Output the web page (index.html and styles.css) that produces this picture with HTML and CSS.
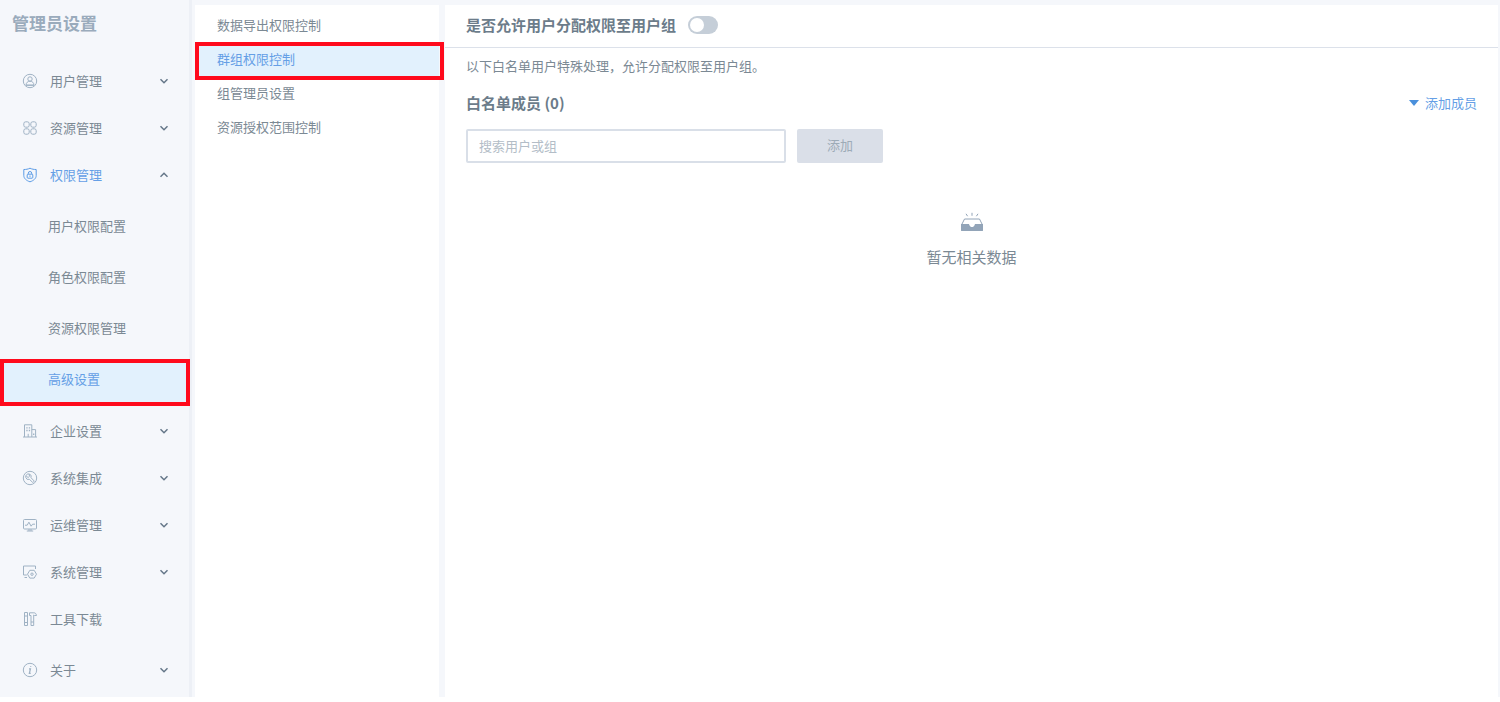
FILE: index.html
```html
<!DOCTYPE html>
<html lang="zh-CN">
<head>
    <meta charset="UTF-8">
    <meta name="viewport" content="width=device-width, initial-scale=1.0">
    <title>管理员设置</title>
    <link rel="stylesheet" href="styles.css">
</head>
<body>
    <div class="app">
        <nav class="sidebar">
            <h1>管理员设置</h1>
            <button class="menu-item" type="button">
                <svg class="icon" viewBox="0 0 16 16"><circle cx="8" cy="8" r="6.7"/><circle cx="8" cy="6" r="2.2"/><path d="M4 12.200c0-2.400 1.700-4 4-4s4 1.600 4 4zM4 12.200h8"/></svg>
                <span>用户管理</span>
                <svg class="arrow" viewBox="0 0 10 10"><path d="M1.500 3.200 5 6.700l3.500-3.500"/></svg>
            </button>
            <button class="menu-item" type="button">
                <svg class="icon" viewBox="0 0 16 16"><rect x="1.800" y="1.800" width="5.400" height="5.400" rx="1.900"/><rect x="8.800" y="1.800" width="5.400" height="5.400" rx="1.900"/><rect x="1.800" y="8.800" width="5.400" height="5.400" rx="1.900"/><rect x="8.800" y="8.800" width="5.400" height="5.400" rx="1.900"/></svg>
                <span>资源管理</span>
                <svg class="arrow" viewBox="0 0 10 10"><path d="M1.500 3.200 5 6.700l3.500-3.500"/></svg>
            </button>
            <button class="menu-item open" type="button" aria-expanded="true">
                <svg class="icon" viewBox="0 0 16 16"><path d="M8 1.200c2 1 4 1.300 6.200 1.300v6c0 3-2.700 5.200-6.200 6.300-3.500-1.100-6.200-3.300-6.200-6.300v-6C4 2.500 6 2.200 8 1.200z"/><rect x="5.200" y="7.200" width="5.600" height="4" rx=".8"/><path d="M6.300 7V6.200a1.700 1.700 0 0 1 3.400 0V7M8 8.500v1.400"/></svg>
                <span>权限管理</span>
                <svg class="arrow" viewBox="0 0 10 10"><path d="M1.500 6.800 5 3.300l3.500 3.500"/></svg>
            </button>
            <ul class="submenu">
                <li><a href="#">用户权限配置</a></li>
                <li><a href="#">角色权限配置</a></li>
                <li><a href="#">资源权限管理</a></li>
                <li class="active marked"><a href="#">高级设置</a></li>
            </ul>
            <button class="menu-item" type="button">
                <svg class="icon" viewBox="0 0 16 16"><path d="M2.500 14V1.800h7.300V14M9.800 6.600h3.800V14M1 14h14M6.200 14v-3.200"/><path d="M4.300 4.800h1.300M6.800 4.800h1.300M4.300 7.500h1.300M6.800 7.500h1.300M11.700 10.500v1.500" stroke-width="1.300"/></svg>
                <span>企业设置</span>
                <svg class="arrow" viewBox="0 0 10 10"><path d="M1.500 3.200 5 6.700l3.500-3.500"/></svg>
            </button>
            <button class="menu-item" type="button">
                <svg class="icon" viewBox="0 0 16 16"><circle cx="8" cy="8" r="6.700"/><path d="M7.200 4a2.800 2.800 0 0 0-3.400 3.500 2.800 2.800 0 0 0 3.700 1.800l3.300 3.300 1.500-1.500L9 7.700A2.800 2.800 0 0 0 7.200 4L7.500 6.300 6.200 7.400 4.400 6.500"/></svg>
                <span>系统集成</span>
                <svg class="arrow" viewBox="0 0 10 10"><path d="M1.500 3.200 5 6.700l3.500-3.500"/></svg>
            </button>
            <button class="menu-item" type="button">
                <svg class="icon" viewBox="0 0 16 16"><rect x="1.500" y="2.500" width="13" height="9.500" rx="1"/><path d="M3 8.200h2.200l1.700-3 2.200 4 1.500-2H13M4.800 14h6.400M6 13h4"/></svg>
                <span>运维管理</span>
                <svg class="arrow" viewBox="0 0 10 10"><path d="M1.500 3.200 5 6.700l3.500-3.500"/></svg>
            </button>
            <button class="menu-item" type="button">
                <svg class="icon" viewBox="0 0 16 16"><path d="M13.500 5V2h-12v9h3.300M2.500 13.500h2.500"/><path d="M7.800 6.300h4.400l2.300 3.900-2.300 3.900H7.800l-2.300-3.900z"/><circle cx="10" cy="10.200" r="1.200"/></svg>
                <span>系统管理</span>
                <svg class="arrow" viewBox="0 0 10 10"><path d="M1.500 3.200 5 6.700l3.500-3.500"/></svg>
            </button>
            <button class="menu-item" type="button">
                <svg class="icon" viewBox="0 0 16 16"><path d="M2.500 1.500h3v13h-3zM2.500 5h3M2.500 11.500h3M7.500 1.800h4.300c1.500 0 2.400.8 2.700 2.700h-2l-.8-.5v10.500H9V4.500H7.500zM9 11h2.700"/></svg>
                <span>工具下载</span>
            </button>
            <button class="menu-item about" type="button">
                <svg class="icon" viewBox="0 0 16 16"><circle cx="8" cy="8" r="6.700"/><path d="M7 6.800h1.400l-1 4.500h1.300M8.700 4.200v.8" stroke-width="1.300"/></svg>
                <span>关于</span>
                <svg class="arrow" viewBox="0 0 10 10"><path d="M1.500 3.200 5 6.700l3.500-3.500"/></svg>
            </button>
        </nav>

        <ul class="settings">
            <li><a href="#">数据导出权限控制</a></li>
            <li class="active marked"><a href="#">群组权限控制</a></li>
            <li><a href="#">组管理员设置</a></li>
            <li><a href="#">资源授权范围控制</a></li>
        </ul>

        <main class="content">
            <header>
                <label for="allow-group">是否允许用户分配权限至用户组</label>
                <input type="checkbox" class="switch" id="allow-group">
            </header>
            <section>
                <p class="tip">以下白名单用户特殊处理，允许分配权限至用户组。</p>
                <div class="title-row">
                    <h2>白名单成员 (0)</h2>
                    <a class="add-link" href="#">添加成员</a>
                </div>
                <form class="search">
                    <input type="text" placeholder="搜索用户或组" aria-label="搜索用户或组">
                    <button type="button" disabled>添加</button>
                </form>
                <div class="empty">
                    <svg viewBox="0 0 24 20"><path class="tray" d="M4.500 7h15l3 6v5.500h-21V13z"/><path class="fill" d="M1 12h7.500c.5 0 .7.500 1 1.200.4 1.200 1.200 1.800 2.500 1.800s2.100-.6 2.500-1.800c.3-.7.500-1.200 1-1.200H23V18a1 1 0 0 1-1 1H2a1 1 0 0 1-1-1z"/><path class="ray" d="M12 .8v3M6 1.800l1.600 2.400M18 1.800l-1.600 2.400"/></svg>
                    <p>暂无相关数据</p>
                </div>
            </section>
        </main>
    </div>
</body>
</html>
```
FILE: styles.css
```css
* { box-sizing: border-box; }
body { margin: 0; background: #fff; color: #7b8994; font: 13px/20px "Noto Sans CJK SC", sans-serif; }
h1, h2, p, ul { margin: 0; padding: 0; }
ul { list-style: none; }
a { color: inherit; text-decoration: none; }
button, input { font: inherit; color: inherit; }

.app { display: flex; min-height: calc(100vh - 5px); margin-bottom: 5px; background: #f5f7fb; }

/* left menu */
.sidebar { flex: none; width: 192px; border-right: 3px solid #edf0f6; }
.sidebar h1 { height: 57px; padding: 11px 12px; font-size: 17px; line-height: 24px; font-weight: 700; color: #9aabbc; }
.menu-item { display: flex; align-items: center; width: 100%; height: 47px; padding: 0 20px 0 22px; border: 0; background: none; text-align: left; cursor: pointer; }
.menu-item span { flex: 1; margin-left: 12px; }
.menu-item.open { color: #659fe6; }
.about { margin-top: 4px; }
.icon { width: 16px; height: 16px; fill: none; stroke: #9fb2c4; stroke-width: 1; }
.open .icon { stroke: #5c9ce6; }
.arrow { width: 10px; height: 10px; fill: none; stroke: #657789; stroke-width: 1.5; }
.submenu { padding: 4px 0 1px; }
.submenu li { margin-top: 4px; height: 47px; }
.submenu a { display: block; height: 47px; padding: 10px 0 0 48px; }
.submenu .active { border-right: 3px solid #5c9ce6; }

.active { background: #e2f1fd; color: #659fe6; }
.marked { position: relative; }
.marked::after { content: ""; position: absolute; inset: 0 -4px 0 0; border: 4px solid #ff0a1c; pointer-events: none; }

/* second level list */
.settings { flex: none; width: 244px; margin: 5px 6px 0 3px; padding-top: 4px; background: #fff; }
.settings a { display: block; height: 34px; padding: 6px 22px; }
.settings .marked::after { inset: -1px -5px -3px 0; }

.content { flex: 1; min-width: 0; margin: 5px 2px 0 0; background: #fff; }
.content header { display: flex; align-items: center; height: 43px; padding: 0 21px 2px; border-bottom: 1px solid #dce1ea; font-size: 15px; font-weight: 700; color: #6c7c8a; }
.switch { appearance: none; width: 30px; height: 18px; margin: 0 0 0 12px; border-radius: 9px; background: #c5ced8; }
.switch::before { content: ""; display: block; width: 14px; height: 14px; margin: 2px; border-radius: 50%; background: #fff; }
.content section { padding: 8px 21px; }
.title-row { display: flex; justify-content: space-between; align-items: center; margin: 17px 0 16px; }
h2 { font-size: 15px; line-height: 20px; font-weight: 700; color: #6c7c8a; }
.add-link { display: flex; align-items: center; gap: 6px; color: #659fe6; }
.add-link::before { content: ""; border: 5px solid transparent; border-top: 6px solid #4a90dc; border-bottom: 0; }

.search { display: flex; gap: 11px; }
.search input { width: 320px; height: 34px; padding: 0 11px 2px; border: 2px solid #d9dfe8; border-radius: 2px; outline: 0; }
.search input::placeholder { color: #b3bdc7; opacity: 1; }
.search button { width: 86px; height: 34px; padding: 0 0 2px; border: 0; border-radius: 2px; background: #dadfe8; color: #9dabb7; }

.empty { padding-top: 49px; text-align: center; font-size: 15px; }
.empty svg { display: block; width: 24px; height: 20px; margin: 0 auto 15px; }
.tray { fill: none; stroke: #92a4b8; }
.fill { fill: #92a4b8; }
.ray { fill: none; stroke: #92a4b8; }
```
